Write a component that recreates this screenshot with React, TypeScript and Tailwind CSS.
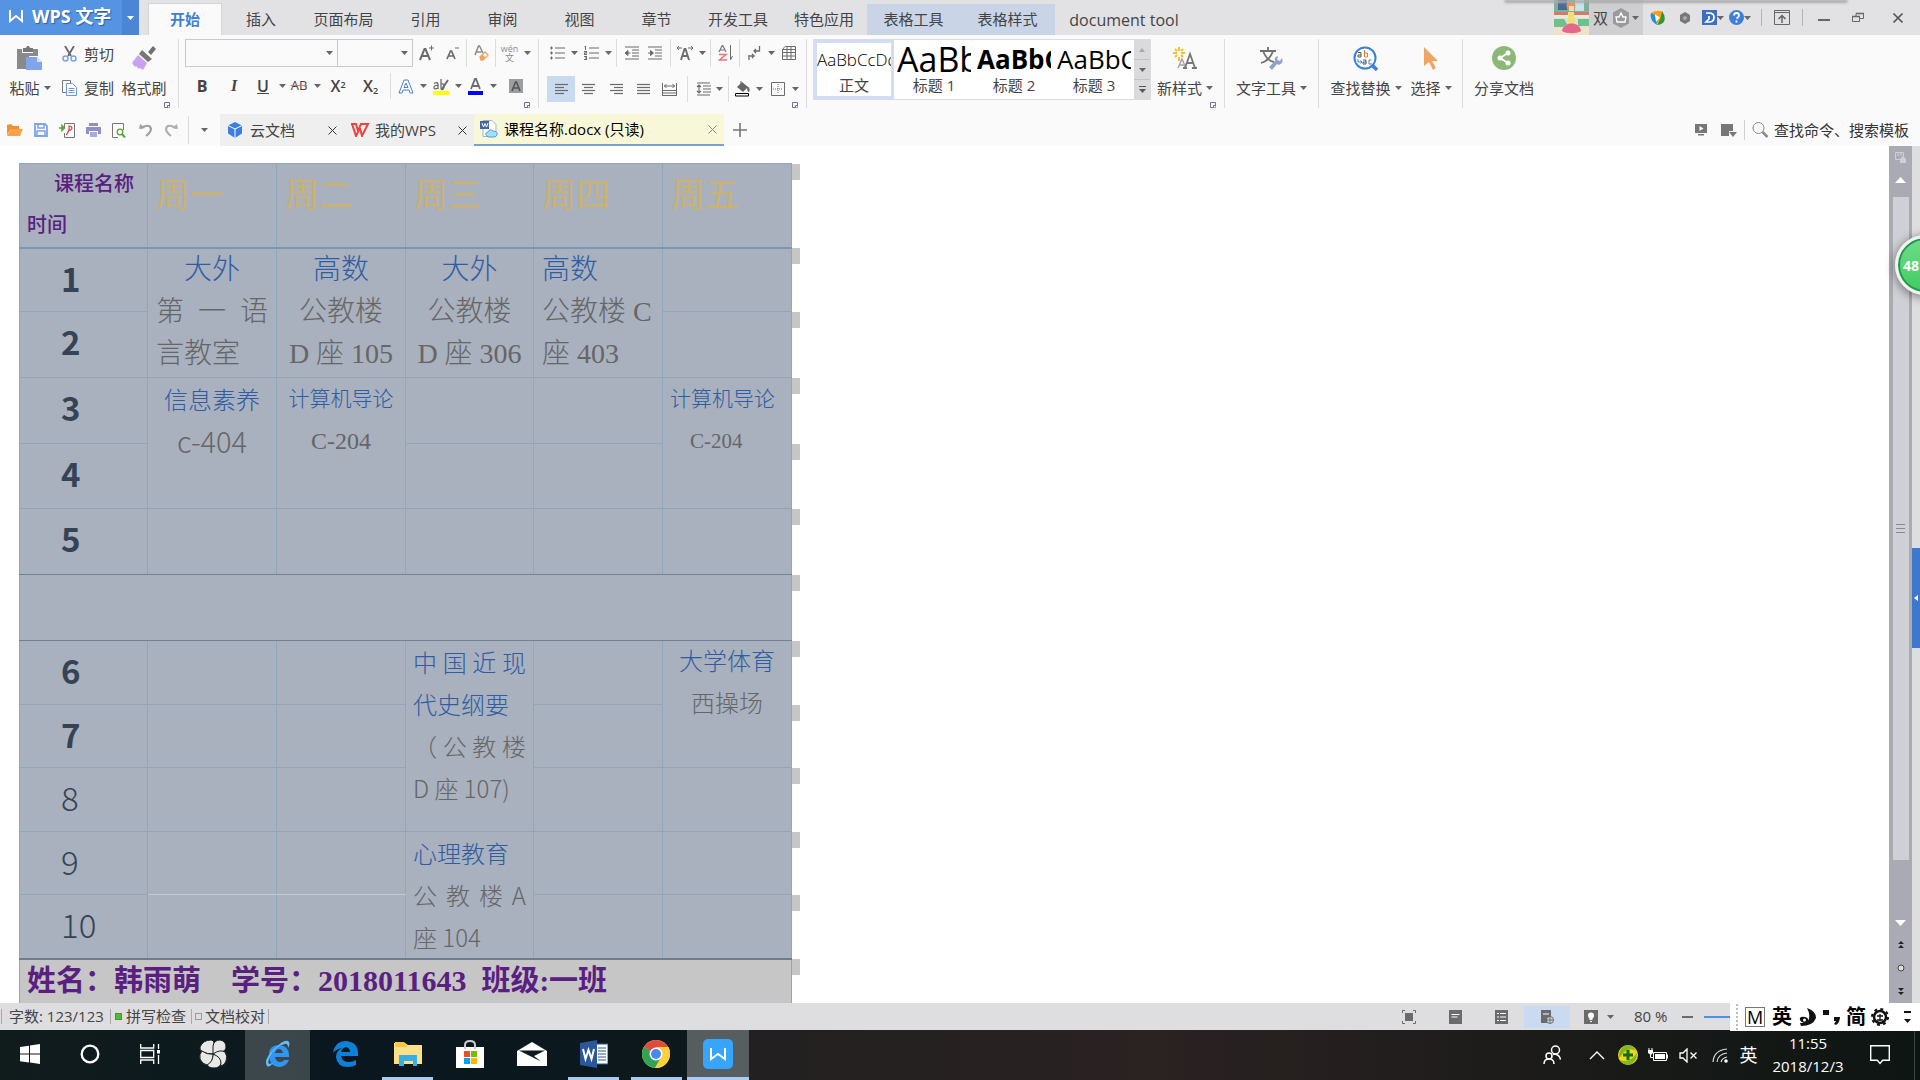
import React from "react";

type Kids = { children?: React.ReactNode };

function Ico({ w = 16, h = 16, vb, children }: Kids & { w?: number; h?: number; vb?: string }) {
  return (
    <svg width={w} height={h} viewBox={vb ?? `0 0 ${w} ${h}`} fill="none" className="shrink-0" aria-hidden="true">
      {children}
    </svg>
  );
}

const G = "#6b6b6b";

function Caret() {
  return (
    <Ico w={7} h={4}>
      <path d="M0 0h7L3.5 4z" fill="#666" />
    </Ico>
  );
}

/* A toolbar button; the width class comes from the caller */
function Tool({ className, label, children }: Kids & { className: string; label: string }) {
  return (
    <button type="button" aria-label={label} className={`flex h-full shrink-0 items-center justify-center ${className}`}>
      {children}
    </button>
  );
}

function Drop({ className, label }: { className: string; label: string }) {
  return (
    <Tool className={className} label={label}>
      <Caret />
    </Tool>
  );
}

function Sep({ className }: { className: string }) {
  return (
    <div className={`flex h-full shrink-0 justify-center ${className}`}>
      <div className="h-full w-px bg-[#dcdcde]" />
    </div>
  );
}

function Launcher() {
  return (
    <button type="button" aria-label="更多设置" className="absolute right-2 bottom-0">
      <Ico w={6} h={6}>
        <path d="M3 5.5H.5V.5h5V3M3.500 3.500H6V6H3.500z" stroke="#6a7396" />
      </Ico>
    </button>
  );
}

function Group({ className, children }: Kids & { className: string }) {
  return (
    <div className={`relative mt-1 h-[69px] shrink-0 border-r border-[#dcdcde] ${className}`}>{children}</div>
  );
}

function BigButton({ className, label, drop, children }: Kids & { className: string; label: string; drop?: boolean }) {
  return (
    <button type="button" className={`flex shrink-0 flex-col items-center ${className}`}>
      <span className="flex h-[34px] items-center pt-1">{children}</span>
      <span className="mt-[5px] flex items-center gap-1 leading-5 whitespace-nowrap">
        {label}
        {drop && <Caret />}
      </span>
    </button>
  );
}

const menuTabs = [
  { t: "插入", c: "w-[78px]" },
  { t: "页面布局", c: "w-[87px]" },
  { t: "引用", c: "w-[77px]" },
  { t: "审阅", c: "w-[77px]" },
  { t: "视图", c: "w-[77px]" },
  { t: "章节", c: "w-[77px]" },
  { t: "开发工具", c: "w-[86px]" },
  { t: "特色应用", c: "w-[86px]" },
];

function TitleBar() {
  return (
    <header className="relative flex h-[35px] shrink-0 items-stretch overflow-hidden bg-[#e2e2e4] text-[#444]">
      <button type="button" className="flex w-[122px] items-center gap-2 bg-[#5593e3] pb-1 pl-2 text-lg font-bold whitespace-nowrap text-white [text-shadow:1px_1px_1px_#2d5f9f]">
        <Ico w={16} h={14}>
          <path d="M2 1v11l6-5 6 5V1" stroke="#fff" strokeWidth="2" />
        </Ico>
        WPS 文字
      </button>
      <button type="button" aria-label="菜单" className="flex w-[17px] items-center justify-center bg-[#4a86d4]">
        <Ico w={7} h={4}>
          <path d="M0 0h7L3.500 4z" fill="#fff" />
        </Ico>
      </button>
      <nav className="ml-[9px] flex items-end">
        <button type="button" className="mt-[3px] h-8 w-[74px] border border-b-0 border-[#d4d4d6] bg-[#fafafa] pb-0 font-bold text-[#3f7fd0]">
          开始
        </button>
        {menuTabs.map((m) => (
          <button type="button" key={m.t} className={`h-[31px] ${m.c}`}>
            {m.t}
          </button>
        ))}
        <button type="button" className="h-[31px] w-[93px] bg-[#c9d5e7]">表格工具</button>
        <button type="button" className="h-[31px] w-[95px] bg-[#c9d5e7]">表格样式</button>
        <button type="button" className="h-[31px] w-[138px] text-base">document tool</button>
      </nav>
      <div className="ml-auto flex items-center">
        <div className="flex h-full w-[89px] items-center bg-[#cfcfd1]">
          <Ico w={35} h={35}>
            <path d="M0 0h35v35H0z" fill="#cfe6dc" />
            <path d="M0 0h35v12H0z" fill="#7fae9a" />
            <path d="M4 0h9v10H4z" fill="#4c6a96" />
            <path d="M21 0h9v11h-9z" fill="#c9e4ee" />
            <path d="M0 12h35v3H0z" fill="#d07c6a" />
            <path d="M0 15h35v3H0z" fill="#f0e6d8" />
            <path d="M0 19h10l3 5-4 3H0zM24 19h11v7H24z" fill="#6fc08a" />
            <path d="M0 27h35v8H0z" fill="#efe2c9" />
            <path d="M14 12h6l1 12h-7z" fill="#f3df7a" />
            <circle cx="17" cy="6" r="4.500" fill="#d99a5a" />
            <path d="M15 6h5v5h-5z" fill="#f7d7b8" />
            <path d="M8 31c1-10 18-10 19 0-4 3-15 3-19 0z" fill="#e4688e" />
            <path d="M15 33h2v2h-2zM19 33h2v2h-2z" fill="#f7d7b8" />
          </Ico>
          <span className="ml-1 text-[15px] leading-5">双</span>
          <button type="button" aria-label="会员" className="ml-1 flex items-center gap-[2px]">
            <Ico w={18} h={20}>
              <path d="M9 0l8 4.500v11L9 20l-8-4.500v-11z" fill="#9a9a9c" />
              <path d="M5 14h8l1-5h-3l-2-4-2 4H4z" stroke="#fff" strokeWidth="1.300" />
            </Ico>
            <Caret />
          </button>
        </div>
        <button type="button" aria-label="视频" className="ml-[7px]">
          <Ico w={15} h={15}>
            <path d="M1 3Q7-1 13 2 12 9 7 14 1 10 1 3z" fill="#f6a01a" />
            <path d="M1 3Q-1 10 7 15L5 5z" fill="#1f8fe0" />
            <path d="M12 1Q17 8 13 13 10 15 7 15 11 9 12 1z" fill="#2c9a2e" />
            <path d="M5 4.500l5 3-4 4z" fill="#fff" />
          </Ico>
        </button>
        <button type="button" aria-label="设置" className="ml-[14px]">
          <Ico w={12} h={12}>
            <path d="M6 0l5 3v6l-5 3-5-3V3z" fill="#777" />
            <circle cx="6" cy="6" r="2" fill="#a9a9a9" />
          </Ico>
        </button>
        <button type="button" aria-label="稻壳" className="ml-[11px] flex items-center">
          <Ico w={15} h={15}>
            <path d="M0 0h15v15H0z" fill="#3d6fba" />
            <path d="M4 3h3q5 0 5 4.500T7 12H4l3-3V6" stroke="#fff" strokeWidth="1.700" />
          </Ico>
          <Caret />
        </button>
        <button type="button" aria-label="帮助" className="ml-[5px] flex items-center">
          <Ico w={15} h={15}>
            <circle cx="7.500" cy="7.500" r="7.500" fill="#3d80d6" />
            <path d="M5 5.500q0-2.500 2.500-2.500T10 5.500q0 1.500-2.500 3M7.500 10.500v2" stroke="#fff" strokeWidth="1.800" />
          </Ico>
          <Caret />
        </button>
        <div className="ml-[10px] h-[17px] w-px bg-[#b4b4b6]" />
        <button type="button" aria-label="功能区" className="ml-3">
          <Ico w={16} h={15}>
            <path d="M.5.5h15v14H.5z M.5 2.500h15" stroke="#666" />
            <path d="M8 13V6M4.500 9L8 5.500 11.500 9" stroke="#666" strokeWidth="1.500" />
          </Ico>
        </button>
        <div className="ml-3 h-[17px] w-px bg-[#b4b4b6]" />
        <button type="button" aria-label="最小化" className="ml-[15px]">
          <Ico w={12} h={12}>
            <path d="M0 8h12" stroke="#666" strokeWidth="2" />
          </Ico>
        </button>
        <button type="button" aria-label="还原" className="ml-[22px]">
          <Ico w={12} h={12}>
            <path d="M.5 4.500h7v5h-7zM4 4V1.500h7.500v5H8" stroke="#666" />
            <path d="M0 4.500h8M4 1.500h8" stroke="#666" strokeWidth="1.500" />
          </Ico>
        </button>
        <button type="button" aria-label="关闭" className="mr-4 ml-7">
          <Ico w={12} h={12}>
            <path d="M1.500 1.500l9 9M10.500 1.500l-9 9" stroke="#555" strokeWidth="1.700" />
          </Ico>
        </button>
      </div>
      <div className="absolute top-0 right-[72px] h-[3px] w-[344px] rounded-b bg-[#a9a9ab] blur-[1px]" />
    </header>
  );
}

function Lines({ rows }: { rows: [number, number][] }) {
  return (
    <Ico w={13} h={12}>
      {rows.map(([a, b], i) => (
        <path key={i} d={`M${a} ${i * 3 + 1}.5H${b}`} stroke={G} strokeWidth="1.2" />
      ))}
    </Ico>
  );
}

function IndentIcon({ flip }: { flip?: boolean }) {
  return (
    <Ico w={14} h={14}>
      <path d="M0 1h14M7 4h7M7 7h7M7 10h7M0 13h14" stroke={G} strokeWidth="1.200" />
      {flip ? <path d="M0 7h3M2.500 4.500L5.500 7l-3 2.500z" stroke={G} fill={G} /> : <path d="M5.500 7h-3M3 4.500L0 7l3 2.500z" stroke={G} fill={G} />}
    </Ico>
  );
}

const styles = [
  { p: "AaBbCcDd", n: "正文", c: "text-[17px] font-light", b: "border-[#d0ddf4]" },
  { p: "AaBb", n: "标题 1", c: "text-[34px]", b: "border-transparent" },
  { p: "AaBbC", n: "标题 2", c: "text-[26px] font-bold", b: "border-transparent" },
  { p: "AaBbC", n: "标题 3", c: "text-[26px]", b: "border-transparent" },
];

function Ribbon() {
  return (
    <div className="flex h-[79px] shrink-0 bg-[#fafafa] text-[#444]">
      <Group className="flex w-[179px]">
        <BigButton className="ml-2 w-[44px]" label="粘贴" drop>
          <Ico w={26} h={25}>
            <path d="M0 3h5v4h11V3h5v7h-9v13H0z" fill="#8a8a8a" />
            <path d="M6 2h3l1-2h2l1 2h3v4H6z" fill="#777" />
            <path d="M9 11h11l5 5v8H9z" fill="#82a5ea" />
            <path d="M20 11v5h5z" fill="#d6e2fa" />
          </Ico>
        </BigButton>
        <div className="ml-[10px] flex flex-col gap-[10px] pt-[3px]">
          <button type="button" className="flex h-6 items-center gap-[7px] whitespace-nowrap">
            <Ico w={15} h={16}>
              <path d="M3 0l6 10M12 0L6 10" stroke="#666" strokeWidth="1.800" />
              <circle cx="3.500" cy="12.500" r="2.500" stroke="#7ea0df" strokeWidth="1.500" />
              <circle cx="11.500" cy="12.500" r="2.500" stroke="#7ea0df" strokeWidth="1.500" />
            </Ico>
            剪切
          </button>
          <button type="button" className="flex h-6 items-center gap-[7px] whitespace-nowrap">
            <Ico w={15} h={16}>
              <path d="M4 12.500H.5V.5h8V3" stroke="#777" />
              <path d="M4.500 3.500h6l4 4v8h-10z" fill="#fff" stroke="#6f96dc" />
              <path d="M6.500 8.500h6M6.500 10.500h6M6.500 12.500h6" stroke="#6f96dc" />
            </Ico>
            复制
          </button>
        </div>
        <BigButton className="ml-[7px] w-[46px]" label="格式刷">
          <Ico w={24} h={24}>
            <path d="M16 6l5-6 3 3-5 6z" fill="#707070" />
            <path d="M10 4l10 9-4 3L7 8z" fill="#777" />
            <path d="M6 9l9 8-4 7-3-2-1 1-3-3-1 1-3-4z" fill="#c9a2f2" />
          </Ico>
        </BigButton>
        <Launcher />
      </Group>

      <Group className="w-[360px] pl-[6px]">
        <div className="flex h-7">
          <div className="relative flex h-full w-[153px] items-center border border-[#c9c9cb]">
            <select aria-label="字体" className="h-full w-full appearance-none bg-transparent"><option></option></select>
            <span className="pointer-events-none absolute right-1"><Caret /></span>
          </div>
          <div className="relative -ml-px flex h-full w-[76px] items-center border border-[#c9c9cb]">
            <select aria-label="字号" className="h-full w-full appearance-none bg-transparent"><option></option></select>
            <span className="pointer-events-none absolute right-1"><Caret /></span>
          </div>
          <Tool className="w-[28px]" label="增大字号">
            <Ico w={16} h={16}>
              <path d="M1 15L5.500 4h1L11 15M2.500 11h7" stroke={G} strokeWidth="2" />
              <path d="M10 3h5M12.500.5v5" stroke={G} />
            </Ico>
          </Tool>
          <Tool className="w-[23px]" label="减小字号">
            <Ico w={14} h={16}>
              <path d="M1 14L4.500 6h1L9 14M2.500 11h5" stroke={G} strokeWidth="1.700" />
              <path d="M9 3h4" stroke={G} />
            </Ico>
          </Tool>
          <Sep className="w-[5px]" />
          <Tool className="w-6" label="清除格式">
            <Ico w={15} h={16}>
              <path d="M1 10L4.500 1h1L9 8M2.500 7h5" stroke="#8a8a8a" strokeWidth="1.500" />
              <path d="M6 12l5-5 3 3-5 5h-2z" fill="#fff" stroke="#eda55b" strokeWidth="1.300" />
              <path d="M6 12l2.500-2.500 3 3L9 15H7z" fill="#eda55b" />
            </Ico>
          </Tool>
          <Sep className="w-[5px]" />
          <Tool className="w-[23px]" label="拼音指南">
            <span className="flex flex-col items-center text-[9px] leading-[9px] text-[#8a8a8a]">
              <span>wén</span>
              <span>文</span>
            </span>
          </Tool>
          <Drop className="w-[13px]" label="拼音选项" />
        </div>
        <div className="mt-[6px] flex h-[26px] font-['Open_Sans'] text-base">
          <Tool className="w-[34px] font-bold" label="加粗">B</Tool>
          <Tool className="w-[30px] font-['Liberation_Serif'] font-bold italic" label="倾斜">I</Tool>
          <Tool className="w-7 font-semibold underline" label="下划线">U</Tool>
          <Drop className="w-[10px]" label="下划线选项" />
          <Tool className="w-6 text-[13px] line-through decoration-[#e07070]" label="删除线">AB</Tool>
          <Drop className="w-3" label="删除线选项" />
          <Tool className="w-[30px] font-semibold" label="上标"><span>X<sup className="text-[9px]">2</sup></span></Tool>
          <Tool className="w-[35px] font-semibold" label="下标"><span>X<sub className="text-[9px]">2</sub></span></Tool>
          <Sep className="w-[5px]" />
          <Tool className="w-[25px]" label="文字效果">
            <Ico w={16} h={15}>
              <path d="M1 14L6 1h4l5 13h-3l-1-3H5l-1 3zM6 8.500h4L8 4z" stroke="#4f7fd0" fill="#fff" />
            </Ico>
          </Tool>
          <Drop className="w-[11px]" label="文字效果选项" />
          <Tool className="w-[23px]" label="突出显示">
            <Ico w={16} h={17}>
              <path d="M0 13h16v4H0z" fill="#ffff00" />
              <path d="M1 5.500q4-2 4 1V11M5 7.500q-4-.5-4 2T5 10M8 1v10M8 6q4-1 3 3t-3 2" stroke={G} strokeWidth="1.300" />
              <path d="M15 2L9 11" stroke={G} strokeWidth="2" />
            </Ico>
          </Tool>
          <Drop className="w-3" label="突出显示选项" />
          <Tool className="w-6" label="字体颜色">
            <Ico w={16} h={17}>
              <path d="M0 13h15v4H0z" fill="#0000ff" />
              <path d="M3 11L7 1h1l4 10M4.500 8h6" stroke={G} strokeWidth="1.800" />
            </Ico>
          </Tool>
          <Drop className="w-[11px]" label="字体颜色选项" />
          <Tool className="w-[34px]" label="字符底纹">
            <Ico w={14} h={14}>
              <path d="M0 0h14v14H0z" fill="#9c9ea4" />
              <path d="M3 12L6.500 3h1L11 12M4.500 9h5" stroke="#555" strokeWidth="1.600" />
            </Ico>
          </Tool>
        </div>
        <Launcher />
      </Group>

      <Group className="w-[268px] pl-[6px]">
        <div className="flex h-7">
          <Tool className="w-6" label="项目符号">
            <Ico w={15} h={14}>
              <path d="M5 2h10M5 7h10M5 12h10" stroke={G} strokeWidth="1.200" />
              <path d="M0 2h3M1.500.5v3M0 7h3M1.500 5.500v3M0 12h3M1.500 10.500v3" stroke={G} />
            </Ico>
          </Tool>
          <Drop className="w-[10px]" label="项目符号选项" />
          <Tool className="w-[25px]" label="编号">
            <Ico w={15} h={16}>
              <path d="M5 3h10M5 8h10M5 13h10M1.500 1v4M.5 1.500h1M0 6.500h2.500V8H.5v1.500H3M0 11.500h2.500v3H0M1 13h1.500" stroke={G} strokeWidth="1.100" />
            </Ico>
          </Tool>
          <Drop className="w-[9px]" label="编号选项" />
          <Sep className="w-[7px]" />
          <Tool className="w-[23px]" label="减少缩进"><IndentIcon /></Tool>
          <Tool className="w-6" label="增加缩进"><IndentIcon flip /></Tool>
          <Sep className="w-[6px]" />
          <Tool className="w-6" label="中文版式">
            <Ico w={16} h={16}>
              <path d="M4 15L7.500 4h1L12 15M5.500 11h5" stroke={G} strokeWidth="1.900" />
              <path d="M0 3h5M2 1L0 3l2 2M16 3h-5M14 1l2 2-2 2" stroke={G} />
            </Ico>
          </Tool>
          <Drop className="w-[10px]" label="中文版式选项" />
          <Sep className="w-[6px]" />
          <Tool className="w-6" label="排序">
            <Ico w={15} h={16}>
              <path d="M1 7L4.500 0 8 7M2 5h5" stroke="#777" strokeWidth="1.200" />
              <path d="M1 9.500h7L1.500 15H9" stroke="#e77678" strokeWidth="1.600" />
              <path d="M12.500 0v14M12.500 15l2-4" stroke={G} />
            </Ico>
          </Tool>
          <Sep className="w-[5px]" />
          <Tool className="w-6" label="显示标记">
            <Ico w={13} h={14}>
              <path d="M11.500 0v5H6M8 3L6 5l2 2M0 10h6M4 8l2 2-2 2M1 14v-3" stroke={G} strokeWidth="1.300" />
            </Ico>
          </Tool>
          <Drop className="w-[10px]" label="显示标记选项" />
          <Tool className="w-[26px]" label="制表位">
            <Ico w={14} h={14}>
              <path d="M3.500.5h10v13h-13v-10M3 .5l-2.500 3h13M.5 6.500h13M.5 10h13M5 0v14M9 0v14" stroke={G} />
            </Ico>
          </Tool>
        </div>
        <div className="mt-[9px] flex h-[26px] pl-[2px]">
          <Tool className="w-7 bg-[#c9daf1]" label="左对齐"><Lines rows={[[0, 13], [0, 9], [0, 13], [0, 9]]} /></Tool>
          <Tool className="w-[27px]" label="居中"><Lines rows={[[0, 13], [2, 11], [0, 13], [2, 11]]} /></Tool>
          <Tool className="w-7" label="右对齐"><Lines rows={[[0, 13], [4, 13], [0, 13], [4, 13]]} /></Tool>
          <Tool className="w-[26px]" label="两端对齐"><Lines rows={[[0, 13], [0, 13], [0, 13], [0, 13]]} /></Tool>
          <Tool className="w-[27px]" label="分散对齐">
            <Ico w={15} h={13}>
              <path d="M.5 0v13M14.500 0v13M2 3h11M4.500 1l-2 2 2 2M10.500 1l2 2-2 2M0 7.500h15M0 10h15M0 12.500h15" stroke={G} />
            </Ico>
          </Tool>
          <Sep className="w-[9px]" />
          <Tool className="w-[22px]" label="行距">
            <Ico w={15} h={14}>
              <path d="M1 1h13M7 4h8M7 7h8M7 10h8M1 13h13M3 3v8M1 5l2-2 2 2M1 9l2 2 2-2" stroke={G} strokeWidth="1.200" />
            </Ico>
          </Tool>
          <Drop className="w-[11px]" label="行距选项" />
          <Sep className="w-[6px]" />
          <Tool className="w-[23px]" label="底纹颜色">
            <Ico w={15} h={16}>
              <path d="M2 6l5-5 6 5-5 5zM12 5q4 2 2 6-2 0-2-6z" fill="#666" />
              <path d="M6 3V0" stroke="#666" />
              <path d="M.5 12.500h13v2.500H.5z" stroke="#000" fill="#fff" />
            </Ico>
          </Tool>
          <Drop className="w-[11px]" label="底纹选项" />
          <Tool className="w-[25px]" label="边框">
            <Ico w={14} h={14}>
              <path d="M.5.5h13v13H.5z" stroke={G} />
              <path d="M7 2v10M2 7h10" stroke={G} strokeDasharray="1 1" />
            </Ico>
          </Tool>
          <Drop className="w-[10px]" label="边框选项" />
        </div>
        <Launcher />
      </Group>

      <Group className="flex w-[418px] pl-[6px]">
        <div className="flex h-[61px] w-[338px] border border-[#dcdcde] bg-white">
          {styles.map((s) => (
            <button type="button" key={s.n} className={`h-[59px] w-20 overflow-hidden border-[3px] ${s.b}`}>
              <span className={`flex h-[31px] items-center overflow-hidden font-['Open_Sans'] whitespace-nowrap text-black ${s.c}`}>{s.p}</span>
              <span className="block text-center leading-5">{s.n}</span>
            </button>
          ))}
          <div className="flex w-4 flex-col divide-y divide-[#c4c4c6] bg-[#dadadc]">
            <button type="button" aria-label="上一行" className="flex flex-1 items-center justify-center">
              <Ico w={6} h={4}><path d="M0 4l3-4 3 4z" fill="#aaa" /></Ico>
            </button>
            <button type="button" aria-label="下一行" className="flex flex-1 items-center justify-center"><Caret /></button>
            <button type="button" aria-label="更多样式" className="flex flex-1 items-center justify-center">
              <Ico w={7} h={7}><path d="M0 .5h7" stroke="#555" /><path d="M0 3h7L3.500 7z" fill="#555" /></Ico>
            </button>
          </div>
        </div>
        <BigButton className="ml-[5px] w-[58px]" label="新样式" drop>
          <Ico w={24} h={22}>
            <path d="M6 0v4M6 10v4M0 6h4M8 6h4M2 2l2 2M10 2L8 4M2 10l2-2M10 10L8 8" stroke="#fbbf24" strokeWidth="2" />
            <path d="M5 21l4-9 4 9M6.500 18h5" stroke="#a5a5a5" strokeWidth="1.500" />
            <path d="M12 21l5-14 5 14M13.500 16h7M10 21h4M19 21h5" stroke="#777" strokeWidth="1.800" />
          </Ico>
        </BigButton>
        <Launcher />
      </Group>

      <Group className="w-[94px]">
        <BigButton className="mx-auto" label="文字工具" drop>
          <Ico w={23} h={23}>
            <path d="M0 4h16M8 0v4M3 4q4 10 11 11M13 4Q10 13 1 16" stroke="#707070" strokeWidth="1.800" />
            <path d="M9 20l6-6q-1-4 3-5l-1 4 3 1 2-3q2 5-3 7l-2-1-5 6z" fill="#8fa0cc" />
          </Ico>
        </BigButton>
      </Group>
      <Group className="flex w-36">
        <BigButton className="ml-[10px] w-[74px]" label="查找替换" drop>
          <Ico w={26} h={25}>
            <circle cx="12" cy="12" r="10.500" stroke="#3d80d6" strokeWidth="2" fill="#fff" />
            <path d="M19 19l5 5" stroke="#3d80d6" strokeWidth="3.500" />
            <path d="M5 6.500h3V11H5V9h3" stroke="#555" />
            <path d="M11.500 4v7M11.500 7h3v4h-3" stroke="#e07c3a" />
            <path d="M5 13v3h4M7.500 14.500L9 16l-1.500 1.500M18.500 14H16v4h3" stroke="#3d80d6" />
            <path d="M10 14h3v4h-3v-2h3" stroke="#555" />
          </Ico>
        </BigButton>
        <BigButton className="ml-[5px] w-[46px]" label="选择" drop>
          <Ico w={16} h={23}>
            <path d="M1 0l14 14-6 0 4 7-3 2-4-8-5 4z" fill="#f0a464" />
          </Ico>
        </BigButton>
      </Group>
      <div className="mt-1 ml-[11px]">
        <BigButton className="" label="分享文档">
          <Ico w={24} h={24}>
            <circle cx="12" cy="12" r="12" fill="#8cb978" />
            <path d="M16 7l-8 5 8 5" stroke="#fff" strokeWidth="2" />
            <circle cx="8" cy="12" r="2.500" fill="#fff" />
            <circle cx="16" cy="7" r="2.500" fill="#fff" />
            <circle cx="16" cy="17" r="2.500" fill="#fff" />
          </Ico>
        </BigButton>
      </div>
    </div>
  );
}

function CloseX({ label, color = "#333" }: { label: string; color?: string }) {
  return (
    <button type="button" aria-label={label}>
      <Ico w={9} h={9}>
        <path d="M.5.5l8 8M8.500.5l-8 8" stroke={color} />
      </Ico>
    </button>
  );
}

function DocTabs() {
  return (
    <div className="flex h-8 shrink-0 items-center bg-[#fafafa] text-[#444]">
      <div className="flex h-7 w-[189px] items-center border-r border-[#dcdcde] pl-[2px]">
        <Tool className="w-[26px]" label="打开">
          <Ico w={16} h={12}><path d="M0 11V1l4-1 2 2h6v3H4z" fill="#f09030" /><path d="M4 5h12l-3 7H0z" fill="#f7a24a" /></Ico>
        </Tool>
        <Tool className="w-[26px]" label="保存">
          <Ico w={14} h={14}><path d="M1 1h10l2 2v10H1z" stroke="#7ea3e8" strokeWidth="1.800" /><path d="M4 1v4h6V1M3 13V8h8v5" stroke="#7ea3e8" strokeWidth="1.500" /></Ico>
        </Tool>
        <Tool className="w-[26px]" label="输出为PDF">
          <Ico w={16} h={15}><path d="M5.500 5V.5h10v14h-10V10" stroke="#777" /><path d="M7 12q4-4 3-9 3 0 3 2.500-1 2.500-4 2" stroke="#d24a4a" strokeWidth="1.200" /><path d="M0 5h4M3 2.500L5.500 5 3 7.500z" stroke="#5ca03a" strokeWidth="1.500" /></Ico>
        </Tool>
        <Tool className="w-[26px]" label="打印">
          <Ico w={15} h={14}><path d="M3 0h9v3H3zM0 4h15v7h-3V8H3v3H0z" fill="#8f8fca" /><path d="M4 9h7v5H4z" fill="#a9a9dc" /></Ico>
        </Tool>
        <Tool className="w-[26px]" label="打印预览">
          <Ico w={14} h={15}><path d="M6 14.500H.5V.5h11V7" stroke="#777" /><circle cx="8" cy="9" r="2.800" stroke="#5ca03a" strokeWidth="1.300" /><path d="M10 11l3 3.500" stroke="#5ca03a" strokeWidth="2" /></Ico>
        </Tool>
        <Tool className="w-[26px]" label="撤销">
          <Ico w={13} h={13}><path d="M2 4q9-5 10 1 0 3-5 7" stroke="#a0a0a0" strokeWidth="2.200" /><path d="M0 5l1-5 5 4z" fill="#a0a0a0" /></Ico>
        </Tool>
        <Tool className="w-[26px]" label="恢复">
          <Ico w={13} h={13}><path d="M11 4Q2-1 1 5q0 3 5 7" stroke="#b0b0b0" strokeWidth="2.200" /><path d="M13 5l-1-5-5 4z" fill="#b0b0b0" /></Ico>
        </Tool>
      </div>
      <Drop className="w-[31px]" label="自定义快速访问" />
      <div className="flex h-8 w-[130px] items-center bg-[#efefef] pl-2">
        <Ico w={14} h={16}>
          <path d="M7 0l7 3.500v8L7 16l-7-4.500v-8z" fill="#3b7fe0" />
          <path d="M0 3.500L7 7l7-3.500M7 7v9" stroke="#fff" />
        </Ico>
        <a href="#cloud" className="ml-2 w-[78px] leading-5">云文档</a>
        <CloseX label="关闭云文档" />
      </div>
      <div className="flex h-8 w-[124px] items-center bg-[#efefef]">
        <Ico w={20} h={14}>
          <path d="M1 1h5l2 7 3-7h4M2 1l4 12 4-8 2 8 6-12h-4" stroke="#ee4242" strokeWidth="2" />
        </Ico>
        <a href="#my" className="ml-[5px] w-[83px] leading-5 whitespace-nowrap">我的WPS</a>
        <CloseX label="关闭我的WPS" />
      </div>
      <div className="flex h-8 w-[250px] items-center border-b-2 border-[#7ba0d4] bg-[#f8f8d8] pl-[6px] text-black">
        <Ico w={18} h={18}>
          <path d="M3 .5h9l4 4v12H3z" fill="#fff" stroke="#9db3d4" />
          <path d="M0 1h9v8H0z" fill="#4563a8" />
          <path d="M2 3l1.500 4L5 3.500 6.500 7 8 3" stroke="#fff" />
          <path d="M7 16q-3-3 1-4 2-4 5-1 5 0 4 4l-2 2H8z" fill="#a9dcf5" stroke="#4a9fd8" />
        </Ico>
        <a href="#doc" className="ml-[6px] w-[204px] leading-5 whitespace-nowrap">课程名称.docx (只读)</a>
        <CloseX label="关闭文档" color="#888" />
      </div>
      <button type="button" aria-label="新建" className="ml-[9px]">
        <Ico w={14} h={14}><path d="M7 0v14M0 7h14" stroke="#777" strokeWidth="1.600" /></Ico>
      </button>
      <div className="ml-auto flex items-center">
        <button type="button" aria-label="演示">
          <Ico w={12} h={12}><path d="M0 0h12v9H0zM3 10h6v1.500H3z" fill="#777" /><path d="M4.500 2l4 2.500-4 2.500z" fill="#fff" /></Ico>
        </button>
        <button type="button" aria-label="窗口" className="ml-[14px]">
          <Ico w={16} h={13}><path d="M0 0h12v7H8v5H0z" fill="#777" /><path d="M8 8h8l-4 5z" fill="#777" /></Ico>
        </button>
        <div className="mx-[7px] h-5 w-px bg-[#d0d0d2]" />
        <Ico w={17} h={16}><circle cx="6.500" cy="6" r="5.500" stroke="#8a8a8a" /><path d="M10.500 10l5 5" stroke="#8a8a8a" strokeWidth="2.500" /></Ico>
        <input aria-label="查找命令、搜索模板" placeholder="查找命令、搜索模板" className="ml-[5px] w-[146px] bg-transparent leading-5 outline-none placeholder:text-[#333]" />
      </div>
    </div>
  );
}

const line = "border-[#8fa6bb]";
const cell = `border ${line} p-0 align-top`;
const blue = "text-[#2f5ca3]";
const sansCell = "font-['Noto_Sans_CJK_SC',sans-serif] text-2xl leading-[42px]";

function Num({ n, bold }: { n: number; bold?: boolean }) {
  return (
    <th scope="row" className={`${cell} pl-[41px] text-left font-['Noto_Sans_CJK_SC',sans-serif] text-[33px] leading-[58px] text-[#354355] ${bold ? "font-bold" : "font-light"}`}>
      {n}
    </th>
  );
}

function Mark() {
  return (
    <td className="border-0 p-0 align-top">
      <div className="h-4 w-2 bg-[#c6c6c6]" />
    </td>
  );
}

function Blank({ n = 1, dim }: { n?: number; dim?: boolean }) {
  return (
    <>
      {Array.from({ length: n }, (_, i) => (
        <td key={i} className={dim ? `${cell} border-b-[#c5c8cf]` : cell} />
      ))}
    </>
  );
}

function Spread({ text }: { text: string }) {
  return (
    <div className="flex justify-between">
      {text.split("").map((ch, i) => (
        <span key={i}>{ch}</span>
      ))}
    </div>
  );
}

function Schedule() {
  return (
    <table className="ml-[19px] w-[780px] table-fixed border-collapse bg-transparent font-['Liberation_Serif','Noto_Sans_CJK_SC',serif] text-[28px] leading-[42px] font-light text-[#666]">
      <colgroup>
        <col className="w-32" />
        <col className="w-[129px]" />
        <col className="w-[129px]" />
        <col className="w-32" />
        <col className="w-[129px]" />
        <col className="w-[129px]" />
        <col className="w-2" />
      </colgroup>
      <tbody className="[&_td:not(:last-child)]:bg-[#a9b0be] [&_th]:bg-[#a9b0be]">
        <tr className="h-[84px]">
          <th className={`${cell} border-b-2 border-b-[#7997b7] px-[7px] text-xl leading-[41px] font-medium text-[#5a2080]`}>
            <div className="pr-[6px] text-right">课程名称</div>
            <div className="text-left">时间</div>
          </th>
          {["周一", "周二", "周三", "周四", "周五"].map((d) => (
            <th key={d} scope="col" className={`${cell} border-b-2 border-b-[#7997b7] pl-2 text-left text-[34px] leading-[64px] font-normal text-[#c9b272]`}>
              {d}
            </th>
          ))}
          <Mark />
        </tr>
        <tr className="h-16">
          <Num n={1} bold />
          <td rowSpan={2} className={`${cell} px-2`}>
            <div className={`text-center ${blue}`}>大外</div>
            <Spread text="第一语" />
            <div>言教室</div>
          </td>
          <td rowSpan={2} className={`${cell} text-center`}>
            <div className={blue}>高数</div>
            <div>公教楼</div>
            <div>D 座 105</div>
          </td>
          <td rowSpan={2} className={`${cell} text-center`}>
            <div className={blue}>大外</div>
            <div>公教楼</div>
            <div>D 座 306</div>
          </td>
          <td rowSpan={2} className={`${cell} pl-2`}>
            <div className={blue}>高数</div>
            <div>公教楼 C</div>
            <div>座 403</div>
          </td>
          <Blank />
          <Mark />
        </tr>
        <tr className="h-[66px]">
          <Num n={2} bold />
          <Blank />
          <Mark />
        </tr>
        <tr className="h-[66px]">
          <Num n={3} bold />
          <td rowSpan={2} className={`${cell} text-center ${sansCell}`}>
            <div className={blue}>信息素养</div>
            <div className="text-[29px] leading-[40px]">c-404</div>
          </td>
          <td rowSpan={2} className={`${cell} text-center`}>
            <div className={`text-[21px] ${blue}`}>计算机导论</div>
            <div className="text-2xl leading-[42px]">C-204</div>
          </td>
          <Blank n={2} />
          <td rowSpan={2} className={`${cell} pl-[7px] text-[21px]`}>
            <div className={blue}>计算机导论</div>
            <div className="pl-5">C-204</div>
          </td>
          <Mark />
        </tr>
        <tr className="h-[65px]">
          <Num n={4} bold />
          <Blank n={2} />
          <Mark />
        </tr>
        <tr className="h-[66px] [&>*:not(:last-child)]:border-b-[#6f8192]">
          <Num n={5} bold />
          <Blank n={5} />
          <Mark />
        </tr>
        <tr className="h-[66px]">
          <td colSpan={6} className="border border-[#8fa6bb] border-y-[#6f8192]" />
          <Mark />
        </tr>
        <tr className="h-16">
          <Num n={6} bold />
          <Blank n={2} />
          <td rowSpan={3} className={`${cell} px-[7px] ${sansCell}`}>
            <div className={blue}>
              <Spread text="中国近现" />
              <div>代史纲要</div>
            </div>
            <Spread text="（公教楼" />
            <div>D 座 107)</div>
          </td>
          <Blank />
          <td rowSpan={2} className={`${cell} text-center text-2xl leading-[42px]`}>
            <div className={blue}>大学体育</div>
            <div>西操场</div>
          </td>
          <Mark />
        </tr>
        <tr className="h-[63px]">
          <Num n={7} bold />
          <Blank n={3} />
          <Mark />
        </tr>
        <tr className="h-16">
          <Num n={8} />
          <Blank n={2} />
          <Blank n={2} />
          <Mark />
        </tr>
        <tr className="h-[63px]">
          <Num n={9} />
          <Blank n={2} dim />
          <td rowSpan={2} className={`${cell} px-[7px] ${sansCell}`}>
            <div className={blue}>心理教育</div>
            <Spread text="公教楼A" />
            <div>座 104</div>
          </td>
          <Blank n={2} />
          <Mark />
        </tr>
        <tr className="h-16">
          <Num n={10} />
          <Blank n={2} />
          <Blank n={2} />
          <Mark />
        </tr>
        <tr className="h-[66px]">
          <td colSpan={6} className="border border-t-2 border-[#8fa6bb] border-t-[#6f7d8c] !bg-[#c6c6c6] p-0 pl-[7px] align-top">
            <div className="flex text-[29px] font-bold whitespace-nowrap text-[#5a2080]">
              <span className="mr-[30px]">姓名：韩雨萌</span>
              <span>学号：</span>
              <span className="mr-[15px] text-[30px]">2018011643</span>
              <span>班级:一班</span>
            </div>
          </td>
          <Mark />
        </tr>
      </tbody>
    </table>
  );
}

function Workspace() {
  return (
    <main className="relative flex min-h-0 flex-1 overflow-hidden bg-white">
      <div className="h-full min-w-0 flex-1 overflow-hidden pt-[17px]">
        <Schedule />
      </div>
      <div className="flex w-[23px] flex-col items-center bg-[#aaaab4]">
        <div className="flex h-[51px] flex-col items-center gap-[14px] pt-[6px]">
          <Ico w={11} h={11}>
            <path d="M.5.5h8v7h-8zM3 0v4M6 0v4" stroke="#cfcfd6" />
            <path d="M5 7l3-3 3 3v4H5z" fill="#cfcfd6" />
          </Ico>
          <Ico w={11} h={6}><path d="M0 6l5.500-6L11 6z" fill="#fff" /></Ico>
        </div>
        <div className="flex min-h-0 w-4 flex-1 items-center justify-center bg-[#cfd0d4]">
          <Ico w={9} h={9}><path d="M0 .5h9M0 4.500h9M0 8.500h9" stroke="#88898d" /></Ico>
        </div>
        <div className="flex h-[143px] flex-col items-center pt-[60px]">
          <Ico w={11} h={6}><path d="M0 0l5.500 6L11 0z" fill="#fff" /></Ico>
          <div className="mt-[15px] flex flex-col items-center gap-4">
            <Ico w={6} h={7}><path d="M0 3l3-3 3 3zM0 7l3-3 3 3z" fill="#222" /></Ico>
            <Ico w={8} h={8}><circle cx="4" cy="4" r="3" fill="#ddd" stroke="#444" /></Ico>
            <Ico w={6} h={7}><path d="M0 0l3 3 3-3zM0 4l3 3 3-3z" fill="#222" /></Ico>
          </div>
        </div>
      </div>
      <aside className="flex w-2 flex-col bg-[#dedee0] pt-[402px]">
        <button type="button" aria-label="展开任务窗格" className="flex h-[100px] items-center justify-center bg-[#3c78cc]">
          <Ico w={4} h={6}><path d="M4 0L0 3l4 3z" fill="#fff" /></Ico>
        </button>
      </aside>
      <div className="absolute top-[89px] -right-[35px] flex size-[60px] items-center rounded-full border-[3px] border-[#f2f2f2] bg-linear-to-b from-[#6fdc86] to-[#3fcb62] pl-[5px] text-[14px] font-bold text-white shadow-[0_2px_8px_2px_rgba(0,0,0,0.35),inset_0_0_0_2px_#1e9a50]">
        48
      </div>
    </main>
  );
}

function StatusBar() {
  return (
    <footer className="flex h-[27px] shrink-0 items-center bg-[#dedee0] text-[#444]">
      <div className="ml-[1px] flex h-[15px] items-center border-l border-[#a9a9ab] pl-[7px] whitespace-nowrap">
        <span className="w-[101px]">字数: 123/123</span>
        <span className="flex h-[15px] items-center gap-1 border-x border-[#a9a9ab] px-1">
          <span className="size-[7px] border border-[#3f9a2a] bg-[#55b83a]" />
          <button type="button" className="w-[61px] text-left">拼写检查</button>
        </span>
        <span className="flex h-[15px] items-center gap-[3px] border-r border-[#a9a9ab] px-[3px]">
          <span className="size-[7px] border border-[#999]" />
          <button type="button">文档校对</button>
        </span>
      </div>
      <div className="ml-auto flex h-full items-center">
        <Tool className="w-[46px]" label="全屏显示">
          <Ico w={14} h={14}><path d="M3 3h8v8H3z" fill={G} /><path d="M.5 3V.5H3M11 .5h2.500V3M.5 11v2.500H3M11 13.500h2.500V11" stroke={G} /></Ico>
        </Tool>
        <Tool className="w-[46px]" label="页面视图">
          <Ico w={13} h={14}><path d="M0 0h13v14H0z" fill={G} /><path d="M2.500 4.500h8M2.500 7h6" stroke="#fff" /></Ico>
        </Tool>
        <Tool className="w-[46px]" label="大纲视图">
          <Ico w={13} h={14}><path d="M0 0h13v14H0z" fill={G} /><path d="M5 3.500h6M5 7h6M5 10.500h6M2 3.500h2M2 7h2M2 10.500h2" stroke="#fff" /></Ico>
        </Tool>
        <Tool className="h-[22px]! w-[46px] bg-[#c9daf1]" label="Web版式">
          <Ico w={13} h={14}><path d="M0 0h10v7H6v6H0z" fill={G} /><path d="M2 4h6" stroke="#fff" /><circle cx="9" cy="10" r="3.500" stroke={G} /><path d="M6 10h6M9 7v6" stroke={G} /></Ico>
        </Tool>
        <Tool className="w-[42px]" label="护眼模式">
          <Ico w={14} h={14}><path d="M0 0h14v14H0z" fill={G} /><circle cx="7" cy="5.500" r="3" fill="#fff" /><path d="M5.500 8h3v2h-3zM6 11h2v1H6z" fill="#fff" /></Ico>
        </Tool>
        <Drop className="w-2 -ml-[6px]" label="护眼选项" />
        <span className="ml-5 w-[46px]">80 %</span>
        <Tool className="w-[14px]" label="缩小">
          <Ico w={11} h={2}><path d="M0 0h11v2H0z" fill={G} /></Ico>
        </Tool>
        <input type="range" aria-label="显示比例" className="ml-[10px] h-[2px] w-[26px] appearance-none bg-[#4f8fe0] [&::-webkit-slider-thumb]:appearance-none" />
        <div className="z-10 flex h-7 w-[190px] items-center self-start bg-white text-black">
          <div className="ml-[6px] h-[26px] border-l-2 border-dotted border-[#bbb]" />
          <span className="ml-[7px] flex size-5 items-center justify-center border border-[#777] text-lg leading-none">M</span>
          <span className="ml-[7px] text-xl leading-6 font-bold">英</span>
          <span className="ml-[7px]"><Ico w={18} h={18}><path d="M8 0q9 3 9 10-3 8-15 8l-1-3 4 0q-5-2-4-5 1-2 5-1 4 1 3 4 3-6-1-13z" fill="#111" /><circle cx="5.500" cy="12" r="1.500" fill="#fff" /></Ico></span>
          <span className="ml-[6px]"><Ico w={17} h={18}><path d="M0 2h6v5H0zM11 9h6q0 5-4 8l-2-1 2-3h-2z" fill="#111" /></Ico></span>
          <span className="ml-[6px] text-xl leading-6 font-bold">简</span>
          <span className="ml-[5px]">
            <Ico w={18} h={18}>
              <circle cx="9" cy="9" r="6" stroke="#111" strokeWidth="2.500" />
              <circle cx="9" cy="9" r="8" stroke="#111" strokeWidth="2" strokeDasharray="3 3.300" />
              <path d="M6 8h6M9 6v7M6 12h6" stroke="#111" strokeWidth="1.300" />
            </Ico>
          </span>
          <span className="ml-[15px]"><Ico w={7} h={12}><path d="M0 0h7v2H0zM0 8h7l-3.500 4z" fill="#111" /></Ico></span>
        </div>
      </div>
    </footer>
  );
}

function TaskButton({ className, label, mark, children }: Kids & { className: string; label: string; mark?: string }) {
  return (
    <button type="button" aria-label={label} className={`flex h-full shrink-0 flex-col items-center justify-between ${className}`}>
      <span className="flex h-[47px] items-center">{children}</span>
      {mark && <span className={`h-[3px] bg-[#a9cbf2] ${mark}`} />}
    </button>
  );
}

function Taskbar() {
  return (
    <div className="flex h-[50px] shrink-0 bg-linear-to-r from-[#101b1d] via-[#2b2222] via-60% to-[#0d1512] text-white">
      <div className="flex w-[749px] bg-linear-to-r from-[#101c1c] via-[#0a171f] to-[#0d191b]">
        <TaskButton className="w-[60px]" label="开始">
          <Ico w={20} h={20}><path d="M0 3l9-1.300V9.500H0zM10 1.500L20 0v9.500H10zM0 10.500h9v8L0 17.200zM10 10.500h10V20l-10-1.400z" fill="#fff" /></Ico>
        </TaskButton>
        <TaskButton className="w-[60px]" label="Cortana">
          <Ico w={20} h={20}><circle cx="10" cy="10" r="8.300" stroke="#fff" strokeWidth="2.300" /></Ico>
        </TaskButton>
        <TaskButton className="w-[60px]" label="任务视图">
          <Ico w={21} h={20}><path d="M.7 0v4h13V0M.7 20v-4h13v4M.7 6.500h13v7H.7zM18.500 0v5M18.500 11v9" stroke="#fff" strokeWidth="1.300" /><path d="M17 6h3v3.500h-3z" fill="#fff" /></Ico>
        </TaskButton>
        <TaskButton className="w-[65px]" label="搜狗">
          <Ico w={28} h={28}>
            <g fill="#e8e8e8" stroke="#14201f" strokeWidth="1">
              <path d="M1 7q3-7 11-7 3 0 3 3v11Q8 14 4 12 0 10 1 7z" />
              <path d="M14 14V6q1-6 7-6 6 1 6 7 0 4-5 5z" />
              <path d="M14 14q7-5 12-2 3 4 1 9-1 4-5 5Q21 17 14 14z" />
              <path d="M14 14q8 3 8 9-1 5-7 5-6 0-7-4 6-3 6-10z" />
              <path d="M14 14q0 8-6 11-5-1-7-6-1-5 2-8 5 4 11 3z" />
            </g>
          </Ico>
        </TaskButton>
        <TaskButton className="w-[65px] bg-white/20" label="Internet Explorer">
          <Ico w={26} h={27}>
            <path d="M4 15Q4 5 14 5q10 1 10 10v2H10q1 5 5 5 3 0 4-2h5q-3 7-10 7-10-1-10-12zM10 13h8q-1-4-4-4t-4 4z" fill="#2f96f3" fillRule="evenodd" />
            <path d="M2 26Q-2 20 9 9 19-1 23 1q3 2 0 7 0-5-3-4-7 1-13 9-5 8-3 11l4-1q-4 5-6 3z" fill="#64bdf8" />
          </Ico>
        </TaskButton>
        <TaskButton className="w-[71px]" label="Edge">
          <Ico w={25} h={26}>
            <path d="M0 12Q2 0 13 0q12 1 12 12v3H8q1 6 8 6 4 0 7-2v5q-4 2-8 2Q4 26 3 16q0-6 6-9-6 1-9 5zM8 11h9q0-4-4-5-4 1-5 5z" fill="#0f80d8" fillRule="evenodd" />
          </Ico>
        </TaskButton>
        <TaskButton className="w-[53px]" label="文件资源管理器" mark="w-[51px]">
          <Ico w={28} h={24}>
            <path d="M0 1h11l3 2h14v19H0z" fill="#ffe08a" />
            <path d="M1 0h9l3 3v2H1z" fill="#fac83c" />
            <path d="M5 24V13h18v11h-4v-5h-9v5z" fill="#33b0ea" />
          </Ico>
        </TaskButton>
        <TaskButton className="w-[71px]" label="应用商店">
          <Ico w={28} h={28}>
            <path d="M0 7h28v21H0z" fill="#fff" />
            <path d="M9 9V5q0-4 5-4t5 4v4" stroke="#ccc" strokeWidth="2" />
            <path d="M8 11h6v6H8z" fill="#ef4d2a" /><path d="M15 11h6v6h-6z" fill="#7cb901" /><path d="M8 18h6v6H8z" fill="#05a2ee" /><path d="M15 18h6v6h-6z" fill="#fdb803" />
          </Ico>
        </TaskButton>
        <TaskButton className="w-[53px]" label="邮件">
          <Ico w={30} h={24}><path d="M0 9L15 0l15 9v15H0z" fill="#fff" /><path d="M2 8.500h26L17 14l7 5.500L2 8.500z" fill="#0c1a1f" /></Ico>
        </TaskButton>
        <TaskButton className="w-[71px]" label="Word" mark="w-[51px]">
          <Ico w={28} h={28}>
            <path d="M15 4h13v20H15z" fill="#fff" stroke="#2b579a" />
            <path d="M18 8h8M18 11h8M18 14h8M18 17h8M18 20h8" stroke="#2b579a" />
            <path d="M0 3l17-3v28L0 25z" fill="#2b579a" />
            <path d="M3 9l2.500 10L8.500 10l3 9L14 9" stroke="#fff" strokeWidth="2" />
          </Ico>
        </TaskButton>
        <TaskButton className="w-[54px]" label="Chrome" mark="w-[51px]">
          <Ico w={28} h={28}>
            <circle cx="14" cy="14" r="14" fill="#fccf3f" />
            <path d="M14 14L1.900 7A14 14 0 0 1 26.100 7z" fill="#e04a3f" />
            <path d="M14 14L1.900 7A14 14 0 0 0 13 28l6-9z" fill="#2fa455" />
            <path d="M14 7h12.500q1.500 3 1.500 7a14 14 0 0 1-15 14l6-11z" fill="#fccf3f" />
            <circle cx="14" cy="14" r="6.500" fill="#fff" /><circle cx="14" cy="14" r="5" fill="#4a88ee" />
          </Ico>
        </TaskButton>
        <TaskButton className="ml-1 w-[62px] bg-white/30" label="WPS" mark="w-full">
          <Ico w={30} h={30}><rect width="30" height="30" rx="5" fill="#36a5fb" /><path d="M8 9v11l7-5 7 5V9" stroke="#fff" strokeWidth="2" /></Ico>
        </TaskButton>
      </div>
      <div className="ml-auto flex items-center text-[15px]">
        <Tool className="w-8" label="人脉">
          <Ico w={18} h={20}>
            <circle cx="12.500" cy="5" r="4" stroke="#fff" strokeWidth="1.500" /><circle cx="6" cy="11" r="3" stroke="#fff" strokeWidth="1.500" />
            <path d="M1 19q0-5 5-5t5 5M10 9.500q6-1 7.500 5" stroke="#fff" strokeWidth="1.500" />
          </Ico>
        </Tool>
        <Tool className="ml-[13px] w-8" label="显示隐藏的图标">
          <Ico w={16} h={9}><path d="M1 8l7-7 7 7" stroke="#fff" strokeWidth="1.400" /></Ico>
        </Tool>
        <Tool className="w-[30px]" label="安全卫士">
          <Ico w={20} h={20}><circle cx="10" cy="10" r="10" fill="#f3d71a" /><path d="M10 0Q0 2 1 13l5-6q7-5 12-1-2-5-8-6zM19 8q0 10-9 12-6-1-8-5 9 4 17-7z" fill="#7fb821" /><path d="M10 5v10M5 10h10" stroke="#166a1a" strokeWidth="3" /></Ico>
        </Tool>
        <Tool className="w-[30px]" label="电池">
          <Ico w={20} h={14}><path d="M5.500 4.500h13v8h-13z" stroke="#fff" /><path d="M7 6h10v5H7zM18 6.500h2v4h-2zM0 2h5v3l-2 2-3-2z" fill="#fff" /><path d="M1 0v2M4 0v2M2.500 6v3.500h3" stroke="#fff" /></Ico>
        </Tool>
        <Tool className="w-[31px]" label="音量">
          <Ico w={19} h={15}><path d="M1 5h3l4-4v13l-4-4H1z" stroke="#fff" strokeWidth="1.300" /><path d="M11.500 4.500l6 6M17.500 4.500l-6 6" stroke="#fff" strokeWidth="1.300" /></Ico>
        </Tool>
        <Tool className="w-[31px]" label="网络">
          <Ico w={16} h={15}><circle cx="14" cy="13" r="1.800" fill="#fff" /><path d="M1 14Q2 2 15 1M5 14q1-8 10-9M9 14q1-4 6-5" stroke="#ddd" strokeWidth="1.200" /></Ico>
        </Tool>
        <Tool className="w-[27px] text-lg" label="输入法">英</Tool>
        <div className="flex w-[92px] flex-col items-center leading-[23px]">
          <span>11:55</span>
          <span>2018/12/3</span>
        </div>
        <Tool className="w-[52px]" label="通知">
          <Ico w={20} h={20}><path d="M.7.7h18.600v14.600h-6.600L10 18.500l-2.700-3.200H.7z" stroke="#fff" strokeWidth="1.400" /></Ico>
        </Tool>
        <div className="ml-[8px] mr-[5px] h-full w-px bg-[#3c4442]" />
      </div>
    </div>
  );
}

export default function App() {
  return (
    <div className="flex h-screen flex-col overflow-hidden font-['Open_Sans','Noto_Sans_CJK_SC',sans-serif] text-[15px]">
      <TitleBar />
      <Ribbon />
      <DocTabs />
      <Workspace />
      <StatusBar />
      <Taskbar />
    </div>
  );
}
